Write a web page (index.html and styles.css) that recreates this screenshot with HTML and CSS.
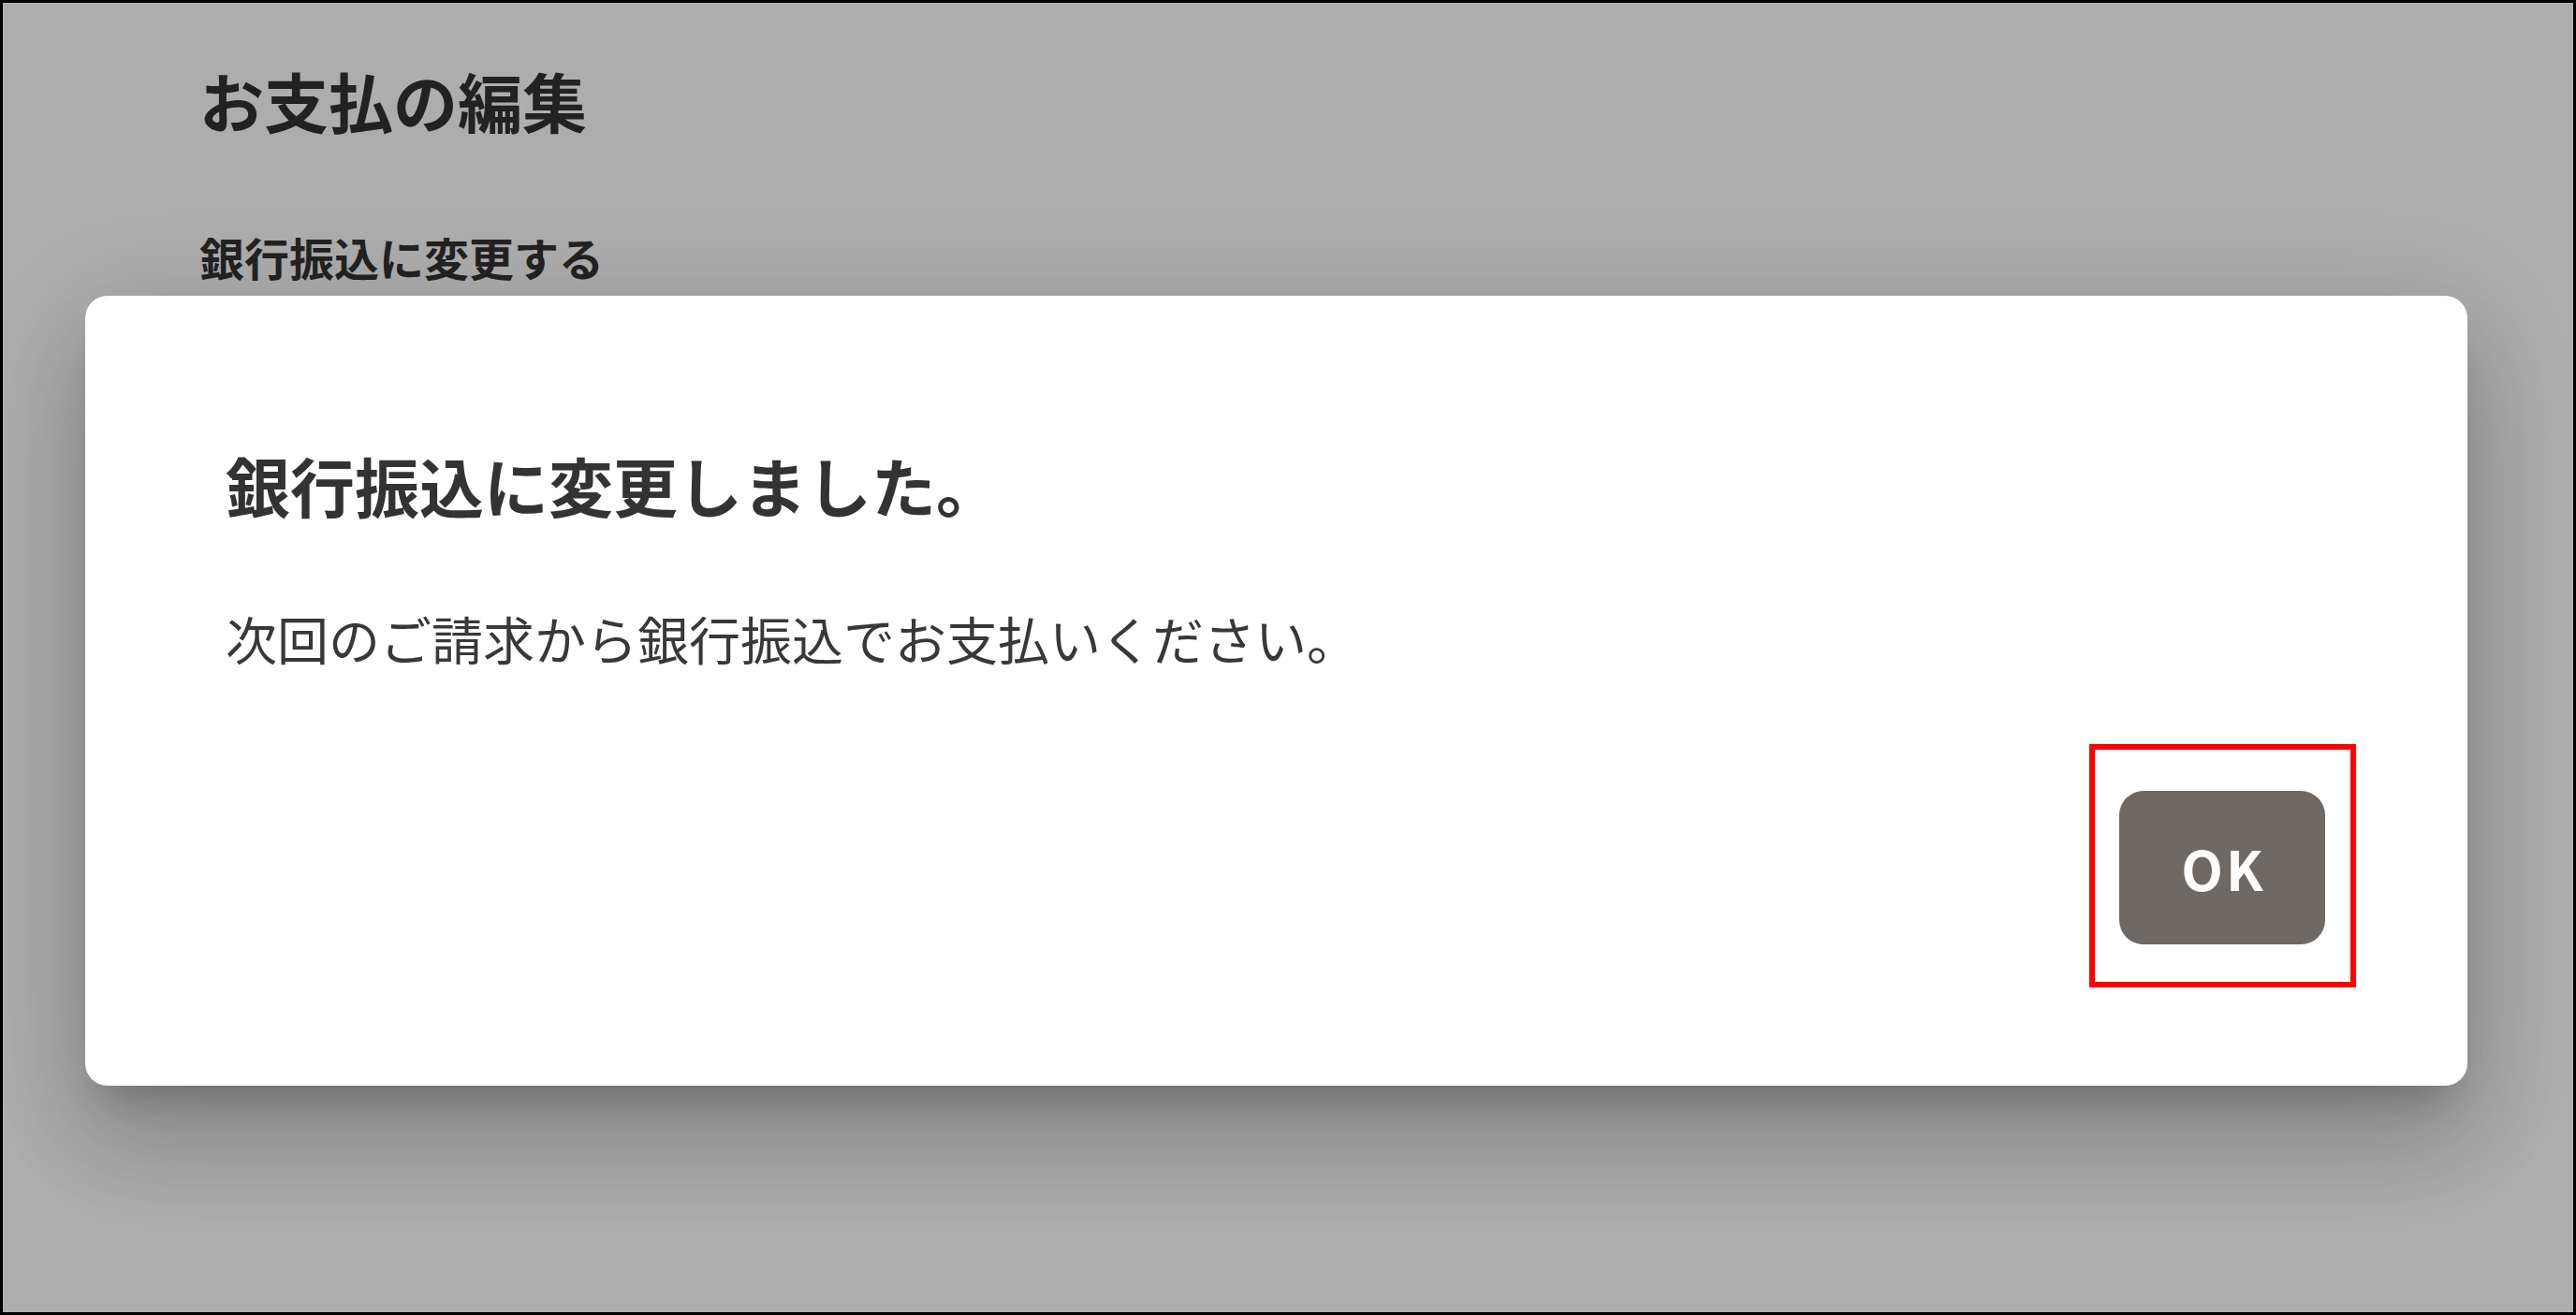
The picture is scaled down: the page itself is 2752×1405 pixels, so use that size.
FILE: index.html
```html
<!DOCTYPE html>
<html lang="ja">
<head>
<meta charset="utf-8">
<title>お支払の編集</title>
<link rel="stylesheet" href="styles.css">
</head>
<body>
<main class="page">
  <h1 class="page-title">お支払の編集</h1>
  <h2 class="section-title">銀行振込に変更する</h2>
</main>

<div class="backdrop">
  <section class="dialog" role="dialog" aria-modal="true">
    <h2 class="dialog-title">銀行振込に変更しました。</h2>
    <p class="dialog-text">次回のご請求から銀行振込でお支払いください。</p>
    <div class="dialog-actions">
      <div class="ok-wrap">
        <button class="ok-button" type="button">OK</button>
        <span class="callout" aria-hidden="true"></span>
      </div>
    </div>
  </section>
</div>

<div class="frame" aria-hidden="true"></div>
</body>
</html>
```

FILE: styles.css
```css
* {
  box-sizing: border-box;
}

html,
body {
  margin: 0;
  padding: 0;
  width: 2752px;
  height: 1405px;
  overflow: hidden;
}

body {
  font-family: "Noto Sans CJK JP", "Noto Sans", sans-serif;
  background: #ffffff;
  color: #333333;
}

.page {
  padding: 73px 0 0 213px;
}

.page-title {
  margin: 0;
  font-size: 69px;
  line-height: 69px;
  font-weight: 700;
  color: #333333;
}

.section-title {
  margin: 108px 0 0;
  font-size: 48px;
  line-height: 48px;
  font-weight: 700;
  color: #333333;
}

.backdrop {
  position: fixed;
  inset: 0;
  background: rgba(0, 0, 0, 0.32);
  display: flex;
  flex-direction: column;
  align-items: stretch;
  padding: 316px 116px 0 91px;
}

.dialog {
  background: #ffffff;
  border-radius: 24px;
  padding: 168px 152px 151px 150px;
  box-shadow:
    0 30px 41px -19px rgba(0, 0, 0, 0.2),
    0 66px 104px 8px rgba(0, 0, 0, 0.14),
    0 25px 126px 22px rgba(0, 0, 0, 0.12);
}

.dialog-title {
  margin: 0;
  font-size: 69px;
  line-height: 69px;
  font-weight: 700;
  color: #333333;
}

.dialog-text {
  margin: 101px 0 0;
  font-size: 55px;
  line-height: 55px;
  font-weight: 400;
  color: #383838;
}

.dialog-actions {
  display: flex;
  justify-content: flex-end;
  margin-top: 136px;
}

.ok-wrap {
  position: relative;
}

.ok-button {
  display: flex;
  align-items: center;
  justify-content: center;
  width: 220px;
  height: 164px;
  border: none;
  border-radius: 26px;
  background: #6e6965;
  color: #ffffff;
  font-family: "Noto Sans CJK JP", "Noto Sans", sans-serif;
  font-size: 58px;
  font-weight: 700;
  letter-spacing: 3px;
  padding: 0 0 0 3px;
}

.callout {
  position: absolute;
  top: -50px;
  left: -32px;
  right: -33px;
  bottom: -46px;
  border: 6px solid #ff0000;
  pointer-events: none;
}

.frame {
  position: fixed;
  inset: 0;
  border: 3px solid #000000;
  pointer-events: none;
}
```
